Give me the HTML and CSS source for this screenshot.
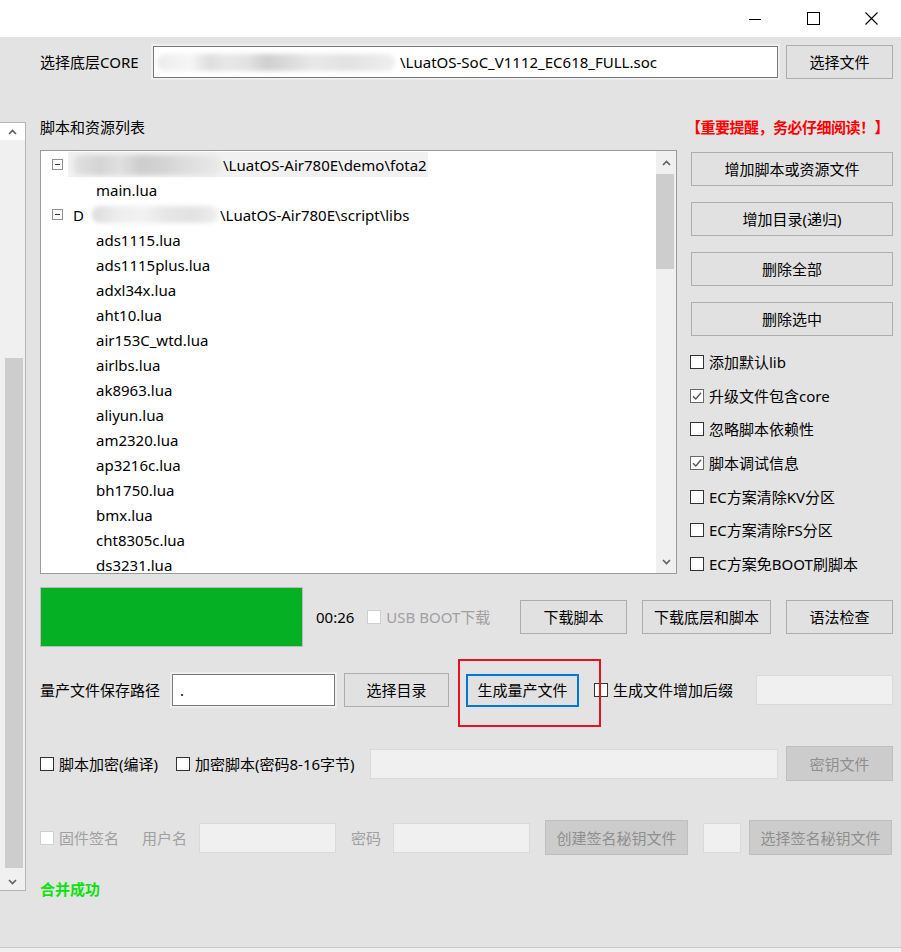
FILE: index.html
```html
<!doctype html>
<html>
  <head>
    <meta charset="utf-8" />
    <title>LuaTools</title>
    <link rel="stylesheet" href="styles.css">
  </head>
  <body>
    <div class="titlebar">
      <span class="tb-btn"><svg width="12" height="12" viewBox="0 0 12 12"><path d="M0 6.5h12" stroke="#000" stroke-width="1"/></svg></span>
      <span class="tb-btn"><svg width="13" height="13" viewBox="0 0 13 13"><rect x="0.5" y="0.5" width="12" height="12" fill="none" stroke="#000" stroke-width="1"/></svg></span>
      <span class="tb-btn"><svg width="13" height="13" viewBox="0 0 13 13"><path d="M0.5 0.5L12.5 12.5M12.5 0.5L0.5 12.5" stroke="#000" stroke-width="1.1"/></svg></span>
    </div>

    <div class="app">
      <div class="side-scroll">
        <div class="arrow"><svg width="9" height="6" viewBox="0 0 9 6"><path d="M1 5L4.5 1.5L8 5" fill="none" stroke="#606060" stroke-width="1.6"/></svg></div>
        <div class="track"><div class="thumb"></div></div>
        <div class="arrow"><svg width="9" height="6" viewBox="0 0 9 6"><path d="M1 1L4.5 4.5L8 1" fill="none" stroke="#606060" stroke-width="1.6"/></svg></div>
      </div>

      <div class="content">
        <div class="row row-core">
          <span class="lbl-core">选择底层CORE</span>
          <div class="field field-core"><span class="smudge smudge-core"></span>\LuatOS-SoC_V1112_EC618_FULL.soc</div>
          <button class="btn btn-core">选择文件</button>
        </div>

        <div class="row row-head">
          <span>脚本和资源列表</span>
          <span class="warn">【重要提醒，务必仔细阅读！】</span>
        </div>

        <div class="main">
          <div class="listbox">
            <div class="tree">
              <div class="node root">
                <span class="expander"></span>
                <span class="node-label picked"><span class="smudge smudge-a"></span>\LuatOS-Air780E\demo\fota2</span>
              </div>
              <div class="node leaf">main.lua</div>
              <div class="node root">
                <span class="expander"></span>
                <span class="node-label">D<span class="smudge smudge-b"></span>\LuatOS-Air780E\script\libs</span>
              </div>
              <div class="node leaf">ads1115.lua</div>
              <div class="node leaf">ads1115plus.lua</div>
              <div class="node leaf">adxl34x.lua</div>
              <div class="node leaf">aht10.lua</div>
              <div class="node leaf">air153C_wtd.lua</div>
              <div class="node leaf">airlbs.lua</div>
              <div class="node leaf">ak8963.lua</div>
              <div class="node leaf">aliyun.lua</div>
              <div class="node leaf">am2320.lua</div>
              <div class="node leaf">ap3216c.lua</div>
              <div class="node leaf">bh1750.lua</div>
              <div class="node leaf">bmx.lua</div>
              <div class="node leaf">cht8305c.lua</div>
              <div class="node leaf">ds3231.lua</div>
            </div>
            <div class="vbar">
              <div class="vbar-arrow"><svg width="9" height="6" viewBox="0 0 9 6"><path d="M1 5L4.5 1.5L8 5" fill="none" stroke="#606060" stroke-width="1.6"/></svg></div>
              <div class="vbar-track"><div class="vbar-thumb"></div></div>
              <div class="vbar-arrow"><svg width="9" height="6" viewBox="0 0 9 6"><path d="M1 1L4.5 4.5L8 1" fill="none" stroke="#606060" stroke-width="1.6"/></svg></div>
            </div>
          </div>

          <div class="side">
            <button class="btn side-btn">增加脚本或资源文件</button>
            <button class="btn side-btn">增加目录(递归)</button>
            <button class="btn side-btn">删除全部</button>
            <button class="btn side-btn">删除选中</button>
            <div class="opts">
              <div class="opt"><span class="cb"></span>添加默认lib</div>
              <div class="opt"><span class="cb on"><svg width="12" height="12" viewBox="0 0 12 12"><path d="M2 6.2L4.8 9L10 2.8" fill="none" stroke="#555" stroke-width="1.4"/></svg></span>升级文件包含core</div>
              <div class="opt"><span class="cb"></span>忽略脚本依赖性</div>
              <div class="opt"><span class="cb on"><svg width="12" height="12" viewBox="0 0 12 12"><path d="M2 6.2L4.8 9L10 2.8" fill="none" stroke="#555" stroke-width="1.4"/></svg></span>脚本调试信息</div>
              <div class="opt"><span class="cb"></span>EC方案清除KV分区</div>
              <div class="opt"><span class="cb"></span>EC方案清除FS分区</div>
              <div class="opt"><span class="cb"></span>EC方案免BOOT刷脚本</div>
            </div>
          </div>
        </div>

        <div class="row row-progress">
          <div class="progress"></div>
          <span class="timer">00:26</span>
          <span class="usb"><span class="cb off"></span>USB BOOT下载</span>
          <div class="btn-group">
            <button class="btn w107">下载脚本</button>
            <button class="btn w129">下载底层和脚本</button>
            <button class="btn w107">语法检查</button>
          </div>
        </div>

        <div class="row row-path">
          <span class="lbl-path">量产文件保存路径</span>
          <div class="field field-path">.</div>
          <button class="btn btn-dir">选择目录</button>
          <span class="gen-wrap"><button class="btn btn-gen">生成量产文件</button></span>
          <span class="cb cb-suffix"></span>
          <span class="lbl-suffix">生成文件增加后缀</span>
          <div class="field off field-suffix"></div>
        </div>

        <div class="row row-enc">
          <span class="cb"></span>
          <span class="gap5">脚本加密(编译)</span>
          <span class="cb cb-enc2"></span>
          <span class="gap5">加密脚本(密码8-16字节)</span>
          <div class="field off field-pass"></div>
          <button class="btn off btn-key">密钥文件</button>
        </div>

        <div class="row row-sign">
          <span class="cb off"></span>
          <span class="gap5 muted">固件签名</span>
          <span class="muted lbl-user">用户名</span>
          <div class="field off field-user"></div>
          <span class="muted lbl-pwd">密码</span>
          <div class="field off field-user"></div>
          <button class="btn off btn-sign">创建签名秘钥文件</button>
          <div class="field off field-tiny"></div>
          <button class="btn off btn-sign btn-sign2">选择签名秘钥文件</button>
        </div>

        <div class="done">合并成功</div>
      </div>
    </div>
  </body>
</html>
```

FILE: styles.css
```css
html { background: #f0f0f0; }
body {
  margin: 0;
  font-family: "Noto Sans", "Noto Sans CJK SC", sans-serif;
  font-size: 15px;
  line-height: 20px;
  color: #000;
}
button { font: inherit; color: inherit; padding: 0; cursor: default; }

/* window chrome */
.titlebar { height: 37px; background: #fff; display: flex; justify-content: flex-end; padding-right: 1px; }
.tb-btn { width: 58px; display: flex; align-items: center; justify-content: center; }

.app {
  display: grid;
  grid-template-columns: 26px 1fr;
  background: #e3e3e3;
  height: 910px;
  border-bottom: 1px solid #c9c9c9;
}

.side-scroll {
  margin-top: 85px;
  height: 769px;
  box-sizing: border-box;
  border: 1px solid #b4b4b4;
  border-left: none;
  background: #f0f0f0;
  display: flex;
  flex-direction: column;
}
.side-scroll .arrow { height: 17px; display: flex; align-items: center; justify-content: center; background: #fff; }
.side-scroll .arrow:last-child { background: #f0f0f0; }
.side-scroll .track { flex: 1; }
.thumb { margin: 218px 0 0 5px; width: 18px; height: 510px; background: #cdcdcd; }

.content { padding: 0 8px 0 14px; }
.row { display: flex; align-items: center; white-space: nowrap; }

/* inputs, buttons, checkboxes */
.field {
  height: 32px;
  box-sizing: border-box;
  border: 1px solid #7a7a7a;
  background: #fff;
  box-shadow: 0 0 0 2px #eeeeee;
  display: flex;
  align-items: center;
  padding-left: 4px;
  overflow: hidden;
  white-space: nowrap;
}
.field.off { border-color: #d9d9d9; background: #f0f0f0; box-shadow: none; height: 30px; }
.btn {
  height: 34px;
  box-sizing: border-box;
  border: 1px solid #adadad;
  background: #e1e1e1;
  text-align: center;
}
.btn.off { background: #cccccc; border-color: #bfbfbf; color: #8f8f8f; height: 35px; }
.cb {
  width: 14px;
  height: 14px;
  box-sizing: border-box;
  border: 1px solid #333;
  background: #fff;
  display: inline-flex;
  align-items: center;
  justify-content: center;
  flex: none;
}
.cb.on { border-color: #6a6a6a; }
.cb.off { border-color: #cfcfcf; }
.muted { color: #a0a0a0; }
.gap5 { margin-left: 5px; }

.smudge { display: inline-block; flex: none; border-radius: 8px; filter: blur(2px); }
.smudge-core {
  width: 238px;
  height: 17px;
  margin-right: 5px;
  background: linear-gradient(90deg, #ececec 0%, #f6f6f6 14%, #dedede 22%, #e8e8e8 30%, #e2e2e2 38%, #d0d0d0 46%, #dcdcdc 56%, #e9e9e9 66%, #e2e2e2 80%, #efefef 100%);
}

/* top rows */
.row-core { margin-top: 8px; height: 34px; }
.lbl-core { width: 113px; }
.field-core { width: 625px; padding-left: 3px; }
.btn-core { width: 107px; margin-left: 8px; }

.row-head { margin-top: 38px; height: 20px; margin-bottom: 13px; justify-content: space-between; }
.warn { color: #ff0000; font-weight: bold; letter-spacing: -0.5px; margin-right: 4px; }

/* list + side column */
.main { display: grid; grid-template-columns: 637px 202px; column-gap: 14px; height: 424px; }
.listbox {
  height: 424px;
  box-sizing: border-box;
  border: 1px solid #9a9a9a;
  background: #fff;
  display: flex;
  overflow: hidden;
}
.tree { flex: 1; padding-top: 1px; overflow: hidden; }
.node { height: 25px; display: flex; align-items: center; white-space: nowrap; }
.node.root { padding-left: 11px; }
.node.leaf { padding-left: 55px; }
.expander {
  width: 9px;
  height: 9px;
  border: 1px solid #919191;
  position: relative;
  flex: none;
}
.expander::after { content: ""; position: absolute; left: 2px; right: 2px; top: 4px; height: 1px; background: #333; }
.node-label { margin-left: 5px; padding: 0 1px 0 5px; height: 25px; display: flex; align-items: center; }
.node-label.picked { background: #f1f1f1; }
.smudge-a {
  width: 148px;
  height: 20px;
  margin-right: 2px;
  background: linear-gradient(90deg, #e2e2e2 0%, #d4d4d4 18%, #e0e0e0 32%, #cdcdcd 46%, #d2d2d2 58%, #dcdcdc 74%, #eaeaea 100%);
}
.smudge-b {
  width: 126px;
  height: 17px;
  margin: 0 2px 0 8px;
  background: linear-gradient(90deg, #dcdcdc 0%, #ededed 20%, #f2f2f2 40%, #e6e6e6 60%, #e2e2e2 80%, #efefef 100%);
}
.vbar { width: 20px; background: #f0f0f0; display: flex; flex-direction: column; }
.vbar-arrow { height: 23px; display: flex; align-items: center; justify-content: center; }
.vbar-track { flex: 1; }
.vbar-thumb { width: 18px; height: 95px; background: #cdcdcd; }

.side { display: flex; flex-direction: column; }
.side-btn { height: 34px; margin-top: 16px; }
.side-btn:first-child { margin-top: 2px; }
.opts { margin-top: 9px; }
.opt { height: 33.7px; display: flex; align-items: center; gap: 5px; margin-left: -1px; white-space: nowrap; }

/* progress row */
.row-progress { margin-top: 13px; height: 60px; }
.progress { width: 263px; height: 60px; box-sizing: border-box; border: 1px solid #bcbcbc; background: #06b025; }
.timer { margin-left: 13px; }
.usb { margin-left: 13px; color: #a0a0a0; display: flex; align-items: center; gap: 5px; }
.btn-group { margin-left: auto; display: flex; gap: 15px; }
.w107 { width: 107px; }
.w129 { width: 129px; }

/* output path row */
.row-path { margin-top: 26px; height: 34px; }
.lbl-path { width: 132px; }
.field-path { width: 163px; padding-left: 7px; }
.btn-dir { width: 105px; margin-left: 9px; }
.gen-wrap { margin-left: 17px; position: relative; display: flex; }
.btn-gen { width: 113px; height: 33px; border: 2px solid #0078d7; }
.gen-wrap::after {
  content: "";
  position: absolute;
  left: -8px;
  top: -15px;
  right: -22px;
  bottom: -20px;
  border: 2px solid #e81123;
  pointer-events: none;
}
.cb-suffix { margin-left: 15px; }
.lbl-suffix { margin-left: 5px; }
.field-suffix { margin-left: auto; width: 137px; }

/* encryption row */
.row-enc { margin-top: 39px; height: 35px; }
.cb-enc2 { margin-left: 18px; }
.field-pass { margin-left: auto; width: 408px; }
.btn-key { width: 107px; margin-left: 8px; }

/* signing row */
.row-sign { margin-top: 39px; height: 35px; }
.lbl-user { margin-left: 23px; }
.field-user { width: 137px; margin-left: 12px; }
.lbl-pwd { margin-left: 15px; }
.btn-sign { width: 143px; margin-left: 15px; }
.field-tiny { width: 38px; height: 32px; margin-left: 15px; background: #f4f4f4; }
.btn-sign2 { margin-left: 8px; }

.done { margin-top: 24px; height: 20px; color: #0be40b; font-weight: bold; }
```
